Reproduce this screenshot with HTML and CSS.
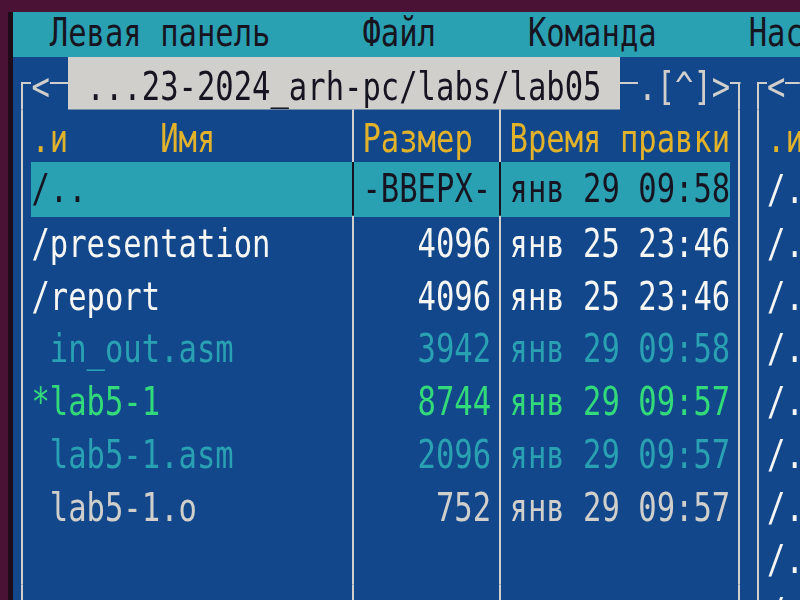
FILE: index.html
```html
<!DOCTYPE html>
<html lang="ru">
<head>
<meta charset="utf-8">
<title>mc</title>
<link rel="stylesheet" href="styles.css">
</head>
<body>
<div class="term">
  <div class="menu">  Левая панель     Файл     Команда     Настройки     Правая панель</div>
  <div class="panels">
    <section class="panel left">
      <div class="title-row">
        <span class="c tl"></span><span class="c t">&lt;</span><span class="c h"></span><span class="ttl"> ...23-2024_arh-pc/labs/lab05 </span><span class="c h"></span><span class="t">.[^]&gt;</span><span class="c tr"></span>
      </div>
      <div class="row head"><span class="v"></span><span class="t">.и     Имя</span><span class="v"></span><span class="t">Размер</span><span class="v"></span><span class="t">Время правки</span><span class="v"></span></div>
      <div class="row sel"><span class="v"></span><span class="t">/..</span><span class="v"></span><span class="t">-ВВЕРХ-</span><span class="v"></span><span class="t">янв 29 09:58</span><span class="v"></span></div>
      <div class="row dir"><span class="v"></span><span class="t">/presentation</span><span class="v"></span><span class="t sz">4096</span><span class="v"></span><span class="t">янв 25 23:46</span><span class="v"></span></div>
      <div class="row dir"><span class="v"></span><span class="t">/report</span><span class="v"></span><span class="t sz">4096</span><span class="v"></span><span class="t">янв 25 23:46</span><span class="v"></span></div>
      <div class="row src"><span class="v"></span><span class="t"> in_out.asm</span><span class="v"></span><span class="t sz">3942</span><span class="v"></span><span class="t">янв 29 09:58</span><span class="v"></span></div>
      <div class="row exe"><span class="v"></span><span class="t">*lab5-1</span><span class="v"></span><span class="t sz">8744</span><span class="v"></span><span class="t">янв 29 09:57</span><span class="v"></span></div>
      <div class="row src"><span class="v"></span><span class="t"> lab5-1.asm</span><span class="v"></span><span class="t sz">2096</span><span class="v"></span><span class="t">янв 29 09:57</span><span class="v"></span></div>
      <div class="row file"><span class="v"></span><span class="t"> lab5-1.o</span><span class="v"></span><span class="t sz">752</span><span class="v"></span><span class="t">янв 29 09:57</span><span class="v"></span></div>
      <div class="row"><span class="v"></span><span class="t"></span><span class="v"></span><span class="t"></span><span class="v"></span><span class="t"></span><span class="v"></span></div>
      <div class="row"><span class="v"></span><span class="t"></span><span class="v"></span><span class="t"></span><span class="v"></span><span class="t"></span><span class="v"></span></div>
    </section>
    <section class="panel right">
      <div class="title-row">
        <span class="c tl"></span><span class="c t">&lt;</span><span class="c h fill"></span>
      </div>
      <div class="rrow head"><span class="v"></span><span class="t">.и</span></div>
      <div class="rrow dir"><span class="v"></span><span class="t">/..</span></div>
      <div class="rrow dir"><span class="v"></span><span class="t">/.cache</span></div>
      <div class="rrow dir"><span class="v"></span><span class="t">/.config</span></div>
      <div class="rrow dir"><span class="v"></span><span class="t">/.local</span></div>
      <div class="rrow dir"><span class="v"></span><span class="t">/.mozilla</span></div>
      <div class="rrow dir"><span class="v"></span><span class="t">/.ssh</span></div>
      <div class="rrow dir"><span class="v"></span><span class="t">/.vim</span></div>
      <div class="rrow dir"><span class="v"></span><span class="t">/.var</span></div>
      <div class="rrow dir"><span class="v"></span><span class="t">/.zoom</span></div>
    </section>
  </div>
</div>
</body>
</html>
```
FILE: styles.css
```css
html, body {
  margin: 0;
  height: 600px;
  overflow: hidden;
}
body {
  background: #4a1336;
}
.term {
  --H: 42.24px;
  --line: #d0cfcc;
  --cyan: #2aa1b3;
  --dark: #171421;
  font-family: "DejaVu Sans Mono", monospace;
  font-size: 30.55px;
  margin: 12px 0 0 13px;
  width: 787px;
  overflow: hidden;
  transform: scaleY(1.25);
  transform-origin: 0 0;
  background: #12488b;
  color: #d0cfcc;
  box-shadow: -5px 0 0 #1f0a18;
}
.menu {
  height: 36px;
  line-height: 33.4px;
  background: var(--cyan);
  color: var(--dark);
  white-space: pre;
  overflow: hidden;
}
.panels {
  display: flex;
}
.panel.left {
  width: 40ch;
  flex: none;
}
.panel.right {
  flex: 1;
  min-width: 0;
}
.title-row {
  display: flex;
  height: var(--H);
  line-height: 47px;
  color: var(--line);
}
.t {
  white-space: pre;
  overflow: visible;
}
.c {
  width: 1ch;
  flex: none;
}
.fill {
  flex: 1;
}
.tl {
  background:
    linear-gradient(var(--line), var(--line)) right center / calc(50% + 1px) 1.6px no-repeat,
    linear-gradient(var(--line), var(--line)) center bottom / 2px 50% no-repeat;
}
.tr {
  background:
    linear-gradient(var(--line), var(--line)) left center / calc(50% + 1px) 1.6px no-repeat,
    linear-gradient(var(--line), var(--line)) center bottom / 2px 50% no-repeat;
}
.h {
  background: linear-gradient(var(--line), var(--line)) center / 100% 1.6px no-repeat;
}
.ttl {
  white-space: pre;
  background: #d0cfcc;
  color: var(--dark);
}
.row {
  display: grid;
  grid-template-columns: 1ch 17ch 1ch 7ch 1ch 12ch 1ch;
  height: var(--H);
  line-height: 46px;
}
.rrow {
  display: grid;
  grid-template-columns: 1ch 1fr;
  height: var(--H);
  line-height: 46px;
}
.v {
  background-image: linear-gradient(to right,
    transparent calc(50% - 1px),
    var(--line) calc(50% - 1px),
    var(--line) calc(50% + 1px),
    transparent calc(50% + 1px));
}
.sz {
  text-align: right;
}
.head {
  color: #e2b22a;
  line-height: 48.4px;
}
.sel {
  color: var(--dark);
  line-height: 44px;
}
.sel > span:not(:first-child):not(:last-child) {
  background-color: var(--cyan);
  --line: var(--dark);
}
.dir {
  color: #f6f6f4;
}
.src {
  color: #2aa1b3;
}
.exe {
  color: #33da7a;
}
.file {
  color: #d0cfcc;
}
```
